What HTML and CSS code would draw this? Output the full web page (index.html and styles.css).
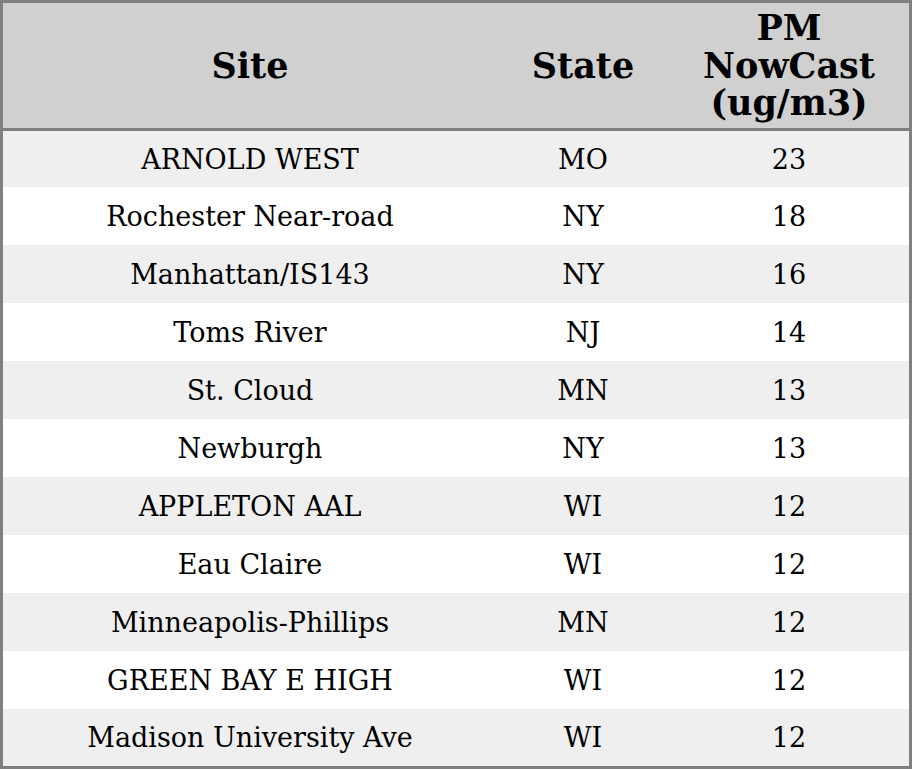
FILE: index.html
```html
<!DOCTYPE html>
<html>
<head>
<meta charset="utf-8">
<link rel="stylesheet" href="styles.css">
</head>
<body>
<table class="aq-table">
  <thead>
    <tr>
      <th class="col-site">Site</th>
      <th class="col-state">State</th>
      <th class="col-pm">PM<br>NowCast<br>(ug/m3)</th>
    </tr>
  </thead>
  <tbody>
    <tr><td>ARNOLD WEST</td><td>MO</td><td>23</td></tr>
    <tr><td>Rochester Near-road</td><td>NY</td><td>18</td></tr>
    <tr><td>Manhattan/IS143</td><td>NY</td><td>16</td></tr>
    <tr><td>Toms River</td><td>NJ</td><td>14</td></tr>
    <tr><td>St. Cloud</td><td>MN</td><td>13</td></tr>
    <tr><td>Newburgh</td><td>NY</td><td>13</td></tr>
    <tr><td>APPLETON AAL</td><td>WI</td><td>12</td></tr>
    <tr><td>Eau Claire</td><td>WI</td><td>12</td></tr>
    <tr><td>Minneapolis-Phillips</td><td>MN</td><td>12</td></tr>
    <tr><td>GREEN BAY E HIGH</td><td>WI</td><td>12</td></tr>
    <tr><td>Madison University Ave</td><td>WI</td><td>12</td></tr>
  </tbody>
</table>
</body>
</html>
```
FILE: styles.css
```css
html, body {
  margin: 0;
  padding: 0;
  background: #ffffff;
}
.aq-table {
  width: 912px;
  height: 769px;
  border-collapse: separate;
  border-spacing: 0;
  border: 3px solid #808080;
  box-sizing: border-box;
  font-family: "DejaVu Serif", serif;
  color: #000;
  table-layout: fixed;
}
.aq-table th {
  background: #d0d0d0;
  font-size: 35px;
  font-weight: bold;
  line-height: 37.5px;
  height: 128px;
  padding: 0;
  text-align: center;
  vertical-align: middle;
  border-bottom: 3px solid #808080;
  box-sizing: border-box;
}
.col-site { width: 494px; }
.col-state { width: 172px; }
.col-pm { width: 240px; }
.aq-table td {
  font-size: 27px;
  height: 58px;
  padding: 0;
  text-align: center;
  vertical-align: middle;
}
.aq-table tbody tr:first-child td {
  height: 56px;
}
.aq-table tbody tr:last-child td {
  height: 57px;
}
.aq-table tbody tr:nth-child(odd) td {
  background: #efefef;
}
.aq-table tbody tr:nth-child(even) td {
  background: #ffffff;
}
```
